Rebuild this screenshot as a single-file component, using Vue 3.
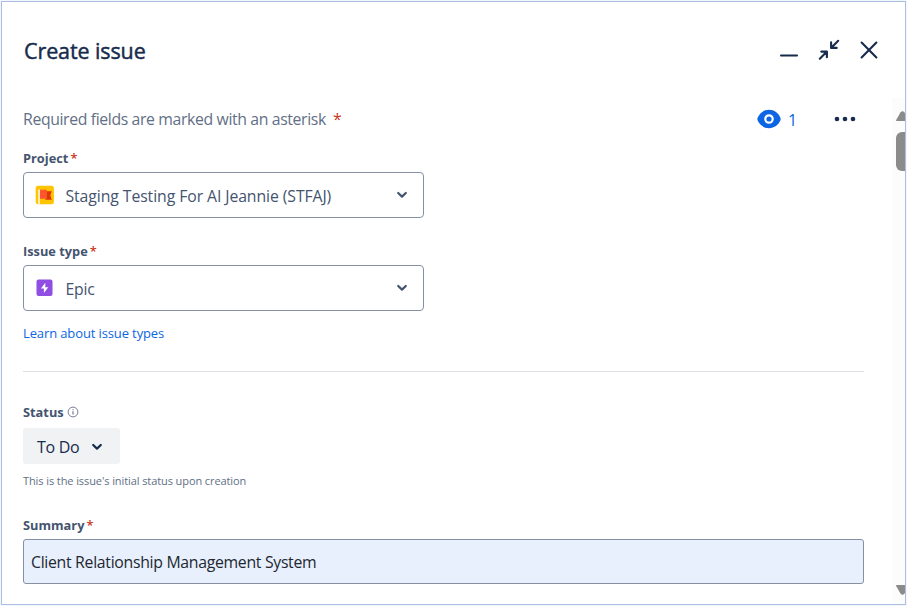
<script setup>
import { ref } from 'vue'

const summary = ref('Client Relationship Management System')
</script>

<template>
  <main class="frame">
    <section class="dialog">
      <header class="header">
        <h1 class="title">Create issue</h1>
        <div class="window-actions">
          <button aria-label="Minimize">
            <svg width="20" height="24" viewBox="0 0 20 24"><path d="M2 17.5H18" /></svg>
          </button>
          <button aria-label="Collapse">
            <svg width="22" height="24" viewBox="0 0 22 24">
              <path d="M1.800 20.700L8.200 14.300M3.300 13.600H8.900V19.200" />
              <path d="M20.200 2.800L13.800 9.200M13.100 4.300V9.900H18.700" />
            </svg>
          </button>
          <button aria-label="Close">
            <svg width="20" height="24" viewBox="0 0 20 24"><path d="M2.600 4.600L17.400 19.400M17.400 4.600L2.600 19.400" /></svg>
          </button>
        </div>
      </header>

      <div class="body">
        <form class="form" @submit.prevent>
          <div class="intro">
            <p class="required-note"><span>Required fields are marked with an asterisk</span><span class="star">*</span></p>
            <div class="intro-actions">
              <svg class="eye" width="24" height="20" viewBox="0 0 24 20">
                <path d="M12 .8C6.600.8 2.600 4.200.6 8.700q-.5 1.300 0 2.600C2.600 15.800 6.600 19.200 12 19.200s9.400-3.400 11.400-7.900q.5-1.300 0-2.600C21.400 4.200 17.400.8 12 .8z" fill="#0c66e4" />
                <circle cx="12" cy="10" r="3.700" fill="#0c66e4" stroke="#fff" stroke-width="2.200" />
              </svg>
              <span class="watchers">1</span>
              <svg class="more" width="22" height="6" viewBox="0 0 22 6" fill="#172b4d">
                <circle cx="3" cy="3" r="2.300" /><circle cx="11" cy="3" r="2.300" /><circle cx="19" cy="3" r="2.300" />
              </svg>
            </div>
          </div>

          <label class="label project-label"><span>Project</span><span class="star">*</span></label>
          <div class="select">
            <svg class="type-icon" width="20" height="20" viewBox="0 0 20 20">
              <rect x=".7" y=".7" width="18.200" height="18.600" rx="2.500" fill="#ffc400" />
              <path d="M4 4.500V19.300" stroke="#fff" stroke-width="1.400" />
              <path d="M5 4.700H11.500V13.800H5z" fill="#ff5630" />
              <path d="M10.500 6.200H16.800L15.300 10.300L16.800 14.700H9.800L11.500 13.400V5z" fill="#de350b" />
            </svg>
            <span class="value project-name">Staging Testing For AI Jeannie (STFAJ)</span>
            <svg class="chevron" width="12" height="8" viewBox="0 0 12 8"><path d="M2.200 2L6 5.600L9.800 2" /></svg>
          </div>

          <label class="label type-label"><span>Issue type</span><span class="star">*</span></label>
          <div class="select">
            <svg class="type-icon" width="20" height="20" viewBox="0 0 20 20">
              <rect x="1.500" y="1.500" width="16" height="16.500" rx="2" fill="#904ee2" />
              <path d="M10.300 4.800L5.900 10.400H8.900V14.900L13.300 9.200H10.300z" fill="#fff" />
            </svg>
            <span class="value">Epic</span>
            <svg class="chevron" width="12" height="8" viewBox="0 0 12 8"><path d="M2.200 2L6 5.600L9.800 2" /></svg>
          </div>
          <a class="learn">Learn about issue types</a>

          <hr class="divider" />

          <div class="label status-label">
            <span>Status</span>
            <svg width="12" height="12" viewBox="0 0 12 12" fill="none" stroke="#626f86">
              <circle cx="6" cy="6" r="4.900" stroke-width=".9" />
              <path d="M6 5.200V8.500M6 3.200V4.200" stroke-width="1.100" />
            </svg>
          </div>
          <button class="status">
            <span>To Do</span>
            <svg class="chevron" width="12" height="8" viewBox="0 0 12 8"><path d="M2.200 2L6 5.600L9.800 2" /></svg>
          </button>
          <p class="hint">This is the issue's initial status upon creation</p>

          <label class="label summary-label"><span>Summary</span><span class="star">*</span></label>
          <input v-model="summary" class="summary" type="text" spellcheck="false" />
        </form>

        <div class="scrollbar">
          <svg width="9" height="12" viewBox="0 0 9 12"><path d="M.8 11Q-.3 11 .3 9.800L4.600 2.300Q6.500.2 8.400 2.300L9 3.300V11z" fill="#8b8b8b" /></svg>
          <div class="thumb"></div>
          <svg class="down" width="9" height="12" viewBox="0 0 9 12"><path d="M.8 1Q-.3 1 .3 2.200L4.600 9.700Q6.500 11.800 8.400 9.700L9 8.700V1z" fill="#8b8b8b" /></svg>
        </div>
      </div>
    </section>
  </main>
</template>

<style>
body {
  margin: 0;
  background: #fff;
}
</style>

<style scoped>
* {
  box-sizing: border-box;
}
.frame {
  width: 907px;
  height: 606px;
  padding: 1px;
  background: #f3f6fc;
  font-family: "Open Sans", "Noto Sans", sans-serif;
  color: #44546f;
}
.dialog {
  display: flex;
  flex-direction: column;
  height: 604px;
  border: 1px solid #abbfe5;
  background: #fff;
  overflow: hidden;
}
button {
  padding: 0;
  border: 0;
  background: none;
  font: inherit;
}
svg {
  display: block;
  flex: none;
}
h1, p {
  margin: 0;
}
.header {
  display: flex;
  justify-content: space-between;
  height: 96px;
  padding: 32px 26px 0 22px;
}
.title {
  height: 34px;
  line-height: 34px;
  font-size: 21.5px;
  font-weight: 500;
  letter-spacing: -0.1px;
  color: #172b4d;
  -webkit-text-stroke: 0.45px #172b4d;
}
.window-actions {
  display: flex;
  gap: 19px;
  height: 24px;
  margin-top: 4px;
}
.window-actions svg {
  fill: none;
  stroke: #172b4d;
  stroke-width: 2.1;
  stroke-linecap: round;
  stroke-linejoin: round;
}
.body {
  display: flex;
  justify-content: space-between;
  flex: 1;
  min-height: 0;
}
.form {
  display: flex;
  flex-direction: column;
  align-items: flex-start;
  width: 841px;
  margin-left: 21px;
}
.intro {
  display: flex;
  justify-content: space-between;
  width: 100%;
  height: 51px;
  padding-top: 9px;
}
.required-note {
  display: flex;
  gap: 7px;
  height: 24px;
  line-height: 24px;
  font-size: 15.8px;
  letter-spacing: -0.37px;
  color: #626f86;
}
.star {
  font-weight: 400;
  color: #ca3521;
}
.label .star {
  font-weight: 600;
}
.intro-actions {
  display: flex;
  align-items: center;
  height: 24px;
  padding-right: 8px;
}
.watchers {
  width: 10px;
  margin: 2px 36px 0 7px;
  font-size: 16px;
  color: #0c66e4;
}
.label {
  display: flex;
  gap: 2px;
  height: 18px;
  line-height: 18px;
  font-size: 12.8px;
  font-weight: 700;
}
.project-label {
  margin-bottom: 5px;
}
.select {
  display: flex;
  align-items: center;
  width: 401px;
  height: 46px;
  padding: 0 15px 0 11px;
  border: 1px solid #8590a2;
  border-radius: 4px;
}
.value {
  flex: 1;
  margin-left: 10.5px;
  padding-top: 2px;
  font-size: 15.8px;
  letter-spacing: -0.2px;
}
.project-name {
  letter-spacing: -0.09px;
}
.chevron {
  fill: none;
  stroke: #44546f;
  stroke-width: 2.2;
  stroke-linecap: round;
  stroke-linejoin: round;
}
.type-label {
  margin: 24px 0 5px;
}
.learn {
  height: 18px;
  margin-top: 13px;
  line-height: 18px;
  font-size: 13px;
  letter-spacing: -0.12px;
  color: #0c66e4;
}
.divider {
  width: 100%;
  height: 1px;
  margin: 29px 0 0;
  border: 0;
  background: #dcdfe4;
}
.status-label {
  gap: 3px;
  align-items: center;
  margin: 31px 0 7px;
}
.status {
  display: flex;
  align-items: center;
  gap: 12px;
  width: 97px;
  height: 36px;
  padding-left: 14px;
  border-radius: 3px;
  background: #f1f2f4;
  font-size: 16px;
  font-weight: 500;
  letter-spacing: -0.3px;
  color: #172b4d;
}
.status span {
  padding-top: 2px;
}
.status .chevron {
  margin-top: 1px;
  stroke: #172b4d;
}
.hint {
  height: 16px;
  margin-top: 9px;
  line-height: 16px;
  font-size: 11px;
  letter-spacing: -0.09px;
  color: #626f86;
}
.summary-label {
  margin: 27px 0 5px;
}
.summary {
  width: 100%;
  height: 45px;
  padding: 0 7px;
  border: 1px solid #8590a2;
  border-radius: 3px;
  outline: none;
  background: #e8f0fe;
  font-family: inherit;
  font-size: 15.8px;
  letter-spacing: -0.3px;
  color: #22272f;
}
.scrollbar {
  display: flex;
  flex-direction: column;
  align-items: flex-end;
  width: 13px;
  padding: 12px 0 8px;
  background: #fcfcfc;
}
.thumb {
  width: 9px;
  height: 39px;
  margin-top: 10px;
  border-radius: 6px 0 0 6px;
  background: #8b8b8b;
}
.down {
  margin-top: auto;
}
</style>
